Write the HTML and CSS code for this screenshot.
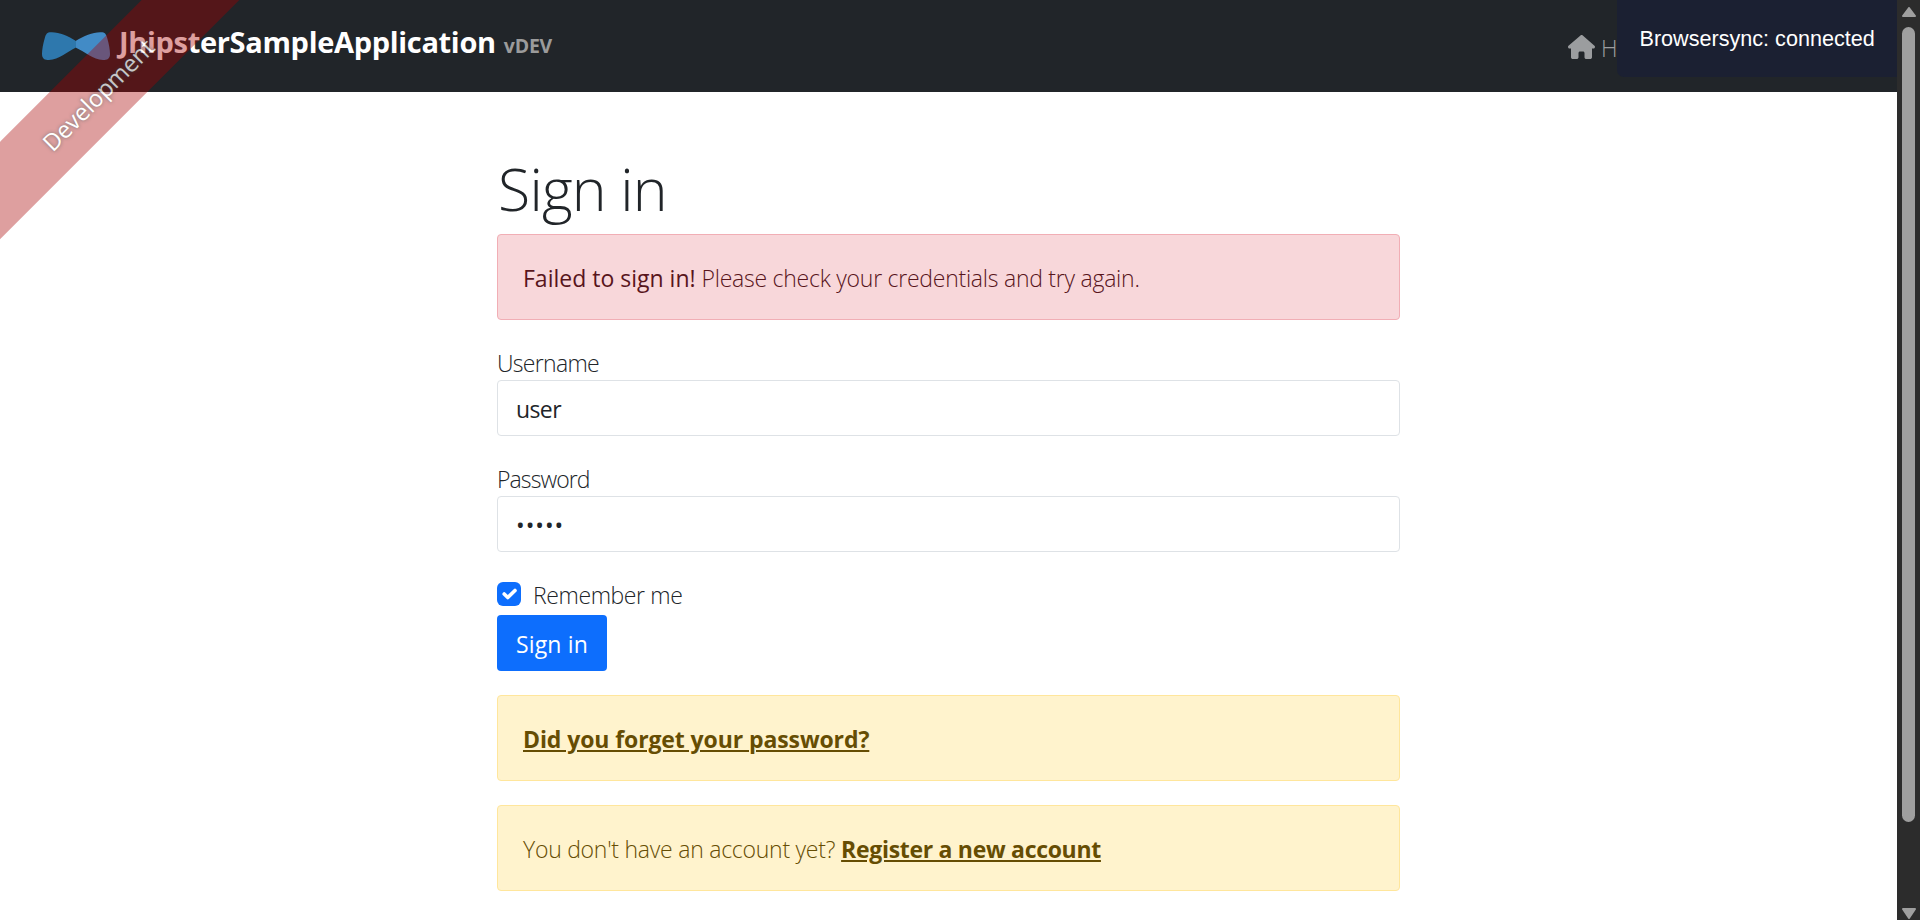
FILE: index.html
```html
<!DOCTYPE html>
<html lang="en">
<head>
<meta charset="utf-8">
<title>Sign in</title>
<link rel="stylesheet" href="styles.css">
</head>
<body>
<div class="page">
  <div class="ribbon"><a class="ribbon-text">Development</a></div>
  <header class="navbar">
    <a class="brand">
      <svg class="logo" viewBox="0 0 68 28" width="68" height="28">
        <path fill="#2e78ad" d="M34 9 C26 4 17 0 9 0.3 C5 .3 4 2 2.8 6 C1 12 0 18 0 22 C0 27 3 28 7 28 C17 27.500 25 20 34 15.500Z"/>
        <path fill="#428bc6" d="M34 8.800 C42 4 51 0 59 0.300 C63 .3 64 2 65.200 6 C67 12 68 18 68 22 C68 27 65 28 61 28 C51 27.500 43 20 34 15.800Z"/>
      </svg>
      <span class="brand-name">JhipsterSampleApplication</span>
      <span class="version">vDEV</span>
    </a>
    <nav class="nav">
      <a class="nav-link">
        <svg width="27" height="24" viewBox="0 0 576 512"><path fill="currentColor" d="M575.8 255.500c0 18-15 32.100-32 32.100h-32l.7 160.200c0 2.700-.2 5.400-.5 8.100V472c0 22.100-17.900 40-40 40H392c-22.100 0-40-17.900-40-40v-88c0-17.700-14.300-32-32-32h-64c-17.700 0-32 14.300-32 32v88c0 22.100-17.900 40-40 40h-80c-22.100 0-40-17.900-40-40V287.600H32c-18 0-32-14-32-32.100 0-9 3-17 10-24L266.400 8c7-7 15-8 22-8s15 2 21 7l255.400 224.500c8 7 12 15 11 24z"/></svg>
        <span>H</span>
      </a>
    </nav>
  </header>
  <main class="content">
    <h1 class="title">Sign in</h1>
    <div class="alert danger"><strong>Failed to sign in!</strong> <span class="message">Please check your credentials and try again.</span></div>
    <form class="form">
      <div class="field">
        <label class="label username-label" for="username">Username</label>
        <input class="input" id="username" type="text" value="user">
      </div>
      <div class="field">
        <label class="label password-label" for="password">Password</label>
        <input class="input password" id="password" type="password" value="admin">
      </div>
      <label class="remember">
        <span class="checkbox"><svg viewBox="0 0 20 20" width="24" height="24"><path fill="none" stroke="#fff" stroke-linecap="round" stroke-linejoin="round" stroke-width="3" d="m6 10 3 3 6-6"/></svg></span>
        <span>Remember me</span>
      </label>
      <button class="submit" type="button">Sign in</button>
    </form>
    <div class="alert warning"><a class="link forgot">Did you forget your password?</a></div>
    <div class="alert warning"><span class="question">You don't have an account yet?</span> <a class="link register">Register a new account</a></div>
  </main>
  <div class="sync">Browsersync: connected</div>
</div>
<div class="scrollbar">
  <svg width="14" height="10" viewBox="0 0 14 10"><path fill="#9f9f9f" stroke="#9f9f9f" stroke-width="2" stroke-linejoin="round" d="M7 1 13 9H1Z"/></svg>
  <div class="thumb"></div>
  <svg class="arrow-down" width="14" height="11" viewBox="0 0 14 11"><path fill="#9f9f9f" stroke="#9f9f9f" stroke-width="2" stroke-linejoin="round" d="M1 1H13L7 10Z"/></svg>
</div>
</body>
</html>
```
FILE: styles.css
```css
* { box-sizing: border-box; }
body {
  margin: 0;
  height: 920px;
  overflow: hidden;
  display: grid;
  grid-template-columns: 1fr 23px;
  font: 300 23px/36px "Open Sans", "Noto Sans", sans-serif;
  color: #212529;
  background: #fff;
}
.page { position: relative; height: 920px; overflow: hidden; }
.navbar {
  height: 92px;
  display: flex;
  justify-content: space-between;
  background: #212529;
}
.brand { display: flex; align-items: baseline; padding: 24px 0 0 42px; color: #fff; font-weight: 700; }
.logo { align-self: flex-start; margin: 8px 9px 0 0; }
.brand-name { font-size: 29px; line-height: 36px; letter-spacing: -0.32px; }
.version { margin-left: 8px; font-size: 19.5px; letter-spacing: -0.2px; color: #9b9b9b; }
.nav { width: 329px; padding-top: 30px; color: #9b9d9f; }
.nav-link { display: flex; gap: 6px; }
.nav-link svg { margin-top: 5px; }
.ribbon {
  position: absolute;
  z-index: 2;
  left: -143.5px;
  top: 59px;
  width: 480px;
  height: 69px;
  padding-top: 2px;
  transform: rotate(-45deg);
  background: rgba(170, 0, 0, .5);
  opacity: .75;
  text-align: center;
}
.ribbon-text {
  font-size: 23.5px;
  line-height: 69px;
  font-weight: 400;
  letter-spacing: -0.1px;
  color: #fff;
  text-shadow: 0 0 4px #444;
}
.content { width: 903px; margin: 0 auto; padding-top: 58px; }
.title {
  margin: 0 0 12px;
  height: 72px;
  padding: 2px 0 0 1px;
  font-size: 59px;
  line-height: 72px;
  font-weight: 300;
  letter-spacing: -0.8px;
}
.alert { height: 86px; margin-bottom: 24px; padding: 25px 24px 23px 25px; border: 1px solid; border-radius: 4px; }
.danger { color: #58151c; background: #f8d7da; border-color: #f1aeb5; }
.danger strong { font-weight: 400; }
.message { letter-spacing: -0.25px; }
.warning { color: #664d03; background: #fff3cd; border-color: #ffe69c; }
.field { display: flex; flex-direction: column; margin-bottom: 24px; }
.label { height: 36px; padding-top: 1px; }
.username-label { letter-spacing: -0.7px; }
.password-label { letter-spacing: -0.9px; }
.input {
  height: 56px;
  padding: 2px 18px 0;
  border: 1px solid #dee2e6;
  border-radius: 4px;
  font: 400 23px/36px "Open Sans", "Noto Sans", sans-serif;
  letter-spacing: -0.6px;
  color: #212529;
  background: #fff;
}
.password { letter-spacing: 1px; }
.remember { display: flex; gap: 12px; height: 36px; margin-bottom: 3px; padding-top: 1px; letter-spacing: -0.4px; }
.checkbox { width: 24px; height: 24px; margin-top: 5px; border-radius: 6px; background: #0d6efd; }
.checkbox svg { display: block; }
.submit {
  display: block;
  width: 110px;
  height: 56px;
  margin-bottom: 24px;
  padding: 2px 0 0;
  border: 0;
  border-radius: 4px;
  font: 400 23px/36px "Open Sans", "Noto Sans", sans-serif;
  letter-spacing: 0.15px;
  color: #fff;
  background: #0d6efd;
}
.link { font-weight: 700; text-decoration: underline; text-decoration-thickness: 2px; text-underline-offset: 2px; }
.forgot { letter-spacing: -0.1px; }
.question { letter-spacing: -0.25px; }
.register { letter-spacing: -0.3px; }
.sync {
  position: absolute;
  z-index: 3;
  top: 0;
  right: 0;
  width: 280px;
  height: 77px;
  padding-left: 22.5px;
  border-bottom-left-radius: 7px;
  font: 400 21.6px/77px "Liberation Sans", Arial, sans-serif;
  white-space: nowrap;
  color: #fff;
  background: #1b2032;
}
.scrollbar {
  display: flex;
  flex-direction: column;
  align-items: center;
  height: 920px;
  padding: 7px 0 1px;
  background: #2c2c2c;
}
.thumb { width: 13px; height: 795px; margin-top: 10px; border-radius: 7px; background: #9f9f9f; }
.arrow-down { margin-top: auto; }
```
